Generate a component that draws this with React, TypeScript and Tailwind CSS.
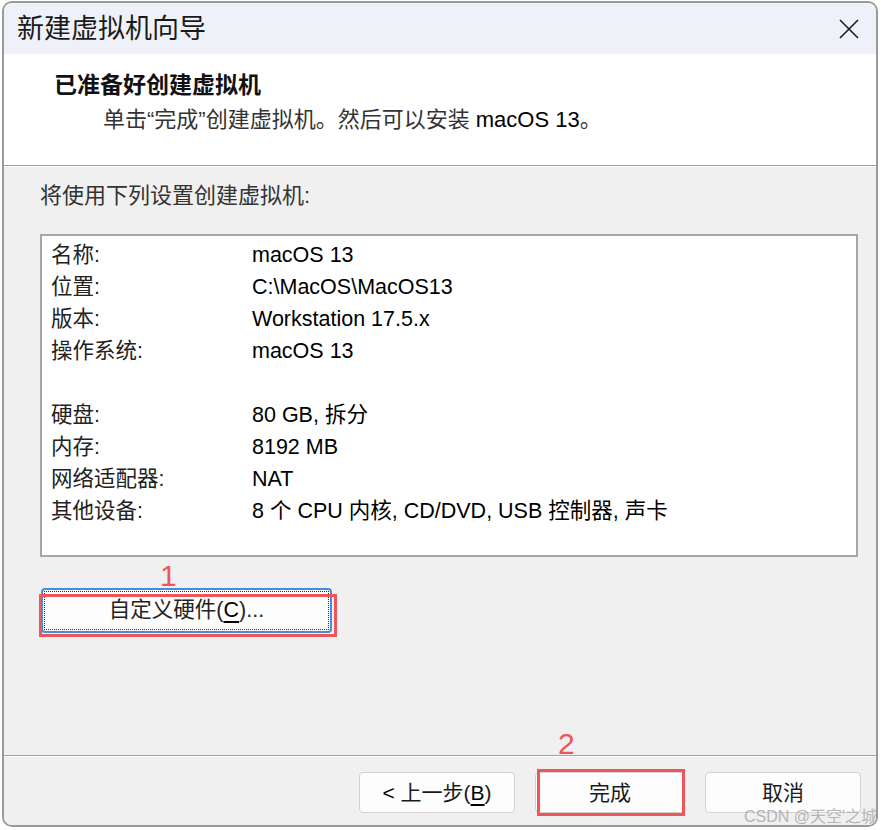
import React from 'react';

type Row = { label: string; value: string } | null;

const rows: Row[] = [
  { label: '名称:', value: 'macOS 13' },
  { label: '位置:', value: 'C:\\MacOS\\MacOS13' },
  { label: '版本:', value: 'Workstation 17.5.x' },
  { label: '操作系统:', value: 'macOS 13' },
  null,
  { label: '硬盘:', value: '80 GB, 拆分' },
  { label: '内存:', value: '8192 MB' },
  { label: '网络适配器:', value: 'NAT' },
  { label: '其他设备:', value: '8 个 CPU 内核, CD/DVD, USB 控制器, 声卡' },
];

const CloseIcon = () => (
  <svg width="20" height="20" viewBox="0 0 20 20" fill="none" stroke="#1c1c1c" strokeWidth="1.6">
    <path d="M1 1L19 19M19 1L1 19" />
  </svg>
);

const FooterButton = ({ width, children }: { width: string; children: React.ReactNode }) => (
  <button
    className={`${width} h-[41px] rounded-[4px] border border-[#d2d2d2] bg-[#fdfdfd] text-[21px] leading-none text-[#1a1a1a] flex items-center justify-center`}
  >
    {children}
  </button>
);

export default function App() {
  return (
    <div className="relative w-[881px] h-[830px] bg-white pt-[1px] pl-[2px] font-['Liberation_Sans','Noto_Sans_CJK_SC',sans-serif] text-black">
      <div className="w-[876px] h-[826px] border-2 border-[#9a9a9a] rounded-[10px] overflow-hidden flex flex-col bg-[#f0f0f0]">
        {/* title bar */}
        <div className="h-[51px] shrink-0 bg-[#eef2f8] flex items-center justify-between pl-[13px] pr-[17px]">
          <span className="text-[27px] leading-none text-[#1a1a1a] mt-[2px]">新建虚拟机向导</span>
          <CloseIcon />
        </div>

        {/* header */}
        <div className="h-[112px] shrink-0 bg-white border-b border-[#a0a0a0] pl-[50px] pt-[16px]">
          <div className="text-[23px] leading-[30px] font-bold text-[#111]">已准备好创建虚拟机</div>
          <div className="pl-[49px] mt-[5px] text-[22px] leading-[30px] text-[#333]">
            单击“完成”创建虚拟机。然后可以安装 <span className="text-black">macOS 13</span>。
          </div>
        </div>

        {/* body */}
        <div className="h-[589px] shrink-0 border-t border-white pl-[36px] pr-[18px] pt-[14px] flex flex-col">
          <div className="text-[22px] leading-[30px] text-[#333]">将使用下列设置创建虚拟机:</div>
          <div className="mt-[23px] h-[323px] bg-white border-2 border-[#a3a7ad] pl-[9px] pt-[4px]">
            {rows.map((row, i) =>
              row ? (
                <div key={i} className="flex h-[32px] items-center text-[21.5px] leading-none">
                  <span className="w-[201px] shrink-0 text-[#222]">{row.label}</span>
                  <span>{row.value}</span>
                </div>
              ) : (
                <div key={i} className="h-[32px]" />
              )
            )}
          </div>
          <div className="mt-[31px] ml-[1px] w-[291px] h-[45px] rounded-[4px] border-2 border-[#3d8fe0] bg-[#fdfdfd] p-[1px]">
            <div className="h-full w-full border border-dotted border-[#333] flex items-center justify-center text-[21.5px] leading-none text-[#222]">
              自定义硬件(<span className="underline underline-offset-4 text-black">C</span>)...
            </div>
          </div>
        </div>

        {/* footer */}
        <div className="flex-1 border-t border-[#a0a0a0] bg-[#f0f0f0]">
          <div className="border-t border-white h-full flex justify-end gap-[20px] pr-[15px] pt-[15px]">
            <FooterButton width="w-[156px]">
              <span className="text-black">&lt;</span>&nbsp;上一步(<span className="underline underline-offset-4 text-black">B</span>)
            </FooterButton>
            <FooterButton width="w-[150px]">完成</FooterButton>
            <FooterButton width="w-[156px]">取消</FooterButton>
          </div>
        </div>
      </div>

      {/* red step markers */}
      <div className="absolute left-[39px] top-[594px] w-[298px] h-[43px] border-[3px] border-[#f0555a]" />
      <div className="absolute left-[160px] top-[561px] text-[30px] leading-none text-[#f0555a]">1</div>
      <div className="absolute left-[537px] top-[769px] w-[148px] h-[47px] border-[3px] border-[#f0555a]" />
      <div className="absolute left-[558px] top-[729px] text-[30px] leading-none text-[#f0555a]">2</div>

      {/* watermark */}
      <div className="absolute right-[4px] bottom-[5px] text-[16px] leading-none text-[#b5b5b5]">
        CSDN @天空'之城
      </div>
    </div>
  );
}
